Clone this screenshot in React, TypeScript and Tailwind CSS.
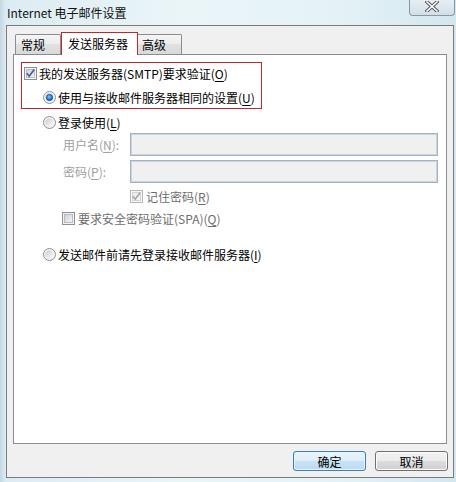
import React, { useId } from "react";

const FONT = "font-['Noto_Sans_CJK_SC','Microsoft_YaHei',sans-serif]";

function CheckBox({ checked, disabled }: { checked?: boolean; disabled?: boolean }) {
  const id = useId().replace(/:/g, "");
  const border = disabled ? "#b7b7b7" : "#8e8f8f";
  return (
    <svg width="13" height="13" viewBox="0 0 13 13" className="shrink-0 block">
      <defs>
        <linearGradient id={`g${id}`} x1="0" y1="0" x2="1" y2="1">
          <stop offset="0" stopColor={disabled ? "#ececec" : "#cbcfd5"} />
          <stop offset="1" stopColor={disabled ? "#fafafa" : "#f6f6f6"} />
        </linearGradient>
      </defs>
      <rect x="0.5" y="0.5" width="12" height="12" fill={disabled ? "#f7f7f7" : "#f4f4f4"} stroke={border} />
      <rect x="2.5" y="2.5" width="8" height="8" fill={`url(#g${id})`} stroke={disabled ? "#d5d5d5" : "#b9bdc4"} />
      {checked && (
        <path
          d="M2.8 6.3 L5.2 9.2 L10.2 2.6"
          stroke={disabled ? "#a7a7a7" : "#4b5f97"}
          strokeWidth="1.7"
          fill="none"
          strokeLinejoin="miter"
        />
      )}
    </svg>
  );
}

function Radio({ checked }: { checked?: boolean }) {
  const id = useId().replace(/:/g, "");
  return (
    <svg width="13" height="13" viewBox="0 0 13 13" className="shrink-0 block">
      <defs>
        <linearGradient id={`r${id}`} x1="0" y1="0" x2="1" y2="1">
          <stop offset="0" stopColor="#c9ccd1" />
          <stop offset="1" stopColor="#fbfbfb" />
        </linearGradient>
        <radialGradient id={`d${id}`} cx="0.45" cy="0.4" r="0.6">
          <stop offset="0" stopColor="#8fd6fb" />
          <stop offset="0.5" stopColor="#2b8ee0" />
          <stop offset="1" stopColor="#0f4f9c" />
        </radialGradient>
      </defs>
      <circle cx="6.5" cy="6.5" r="6" fill="#f4f4f4" stroke="#8e8f8f" />
      <circle cx="6.5" cy="6.5" r="4.2" fill={`url(#r${id})`} />
      {checked && <circle cx="6.5" cy="6.5" r="3.2" fill={`url(#d${id})`} stroke="#1d4f8c" strokeWidth="0.6" />}
    </svg>
  );
}

function U({ c }: { c: string }) {
  return <span className="underline underline-offset-[2px]">{c}</span>;
}

export default function App() {
  return (
    <div
      className={`${FONT} w-[456px] h-[482px] overflow-hidden text-[12px] leading-[13px] text-black bg-[linear-gradient(90deg,#c4d8e2_0px,#dcecf2_6px,#eaf5f8_40%,#e4f2f6_75%,#d3e7ef_100%)]`}
    >
      {/* Title bar */}
      <div className="h-[25px] flex justify-between">
        <div className="pl-[7px] pt-[6px] text-[12px] leading-[13px] text-[#111]">Internet 电子邮件设置</div>
        <div className="mr-[1px] w-[46px] h-[16px] rounded-b-[4px] border border-t-0 border-[#8797a8] bg-[linear-gradient(#e6eef3,#d2dee6)] flex items-start justify-center pt-[1px]">
          <svg width="14" height="11" viewBox="0 0 14 11">
            <path d="M2 1 L12 10 M12 1 L2 10" stroke="#4a4f55" strokeWidth="3.4" strokeLinecap="square" />
            <path d="M2 1 L12 10 M12 1 L2 10" stroke="#ffffff" strokeWidth="1.6" strokeLinecap="square" />
          </svg>
        </div>
      </div>

      {/* Client area */}
      <div className="ml-[6px] w-[448px] h-[453px] border border-[#7b7b7b] bg-[#f0f0f0] px-[6px] pt-[6px] flex flex-col">
        {/* Tabs */}
        <div className="h-[22px] flex items-end relative z-10">
          <div className="ml-[2px] w-[46px] h-[20px] border border-b-0 border-[#898c95] rounded-t-[2px] bg-[linear-gradient(#f5f5f5,#ececec_50%,#e1e1e1_50%,#d9d9d9)] pl-[5px] pt-[3px]">
            常规
          </div>
          <div className="w-[77px] h-[23px] -mb-[1px] border border-b-0 border-[#c4262e] bg-white flex justify-center pt-[4px] pr-[3px]">
            发送服务器
          </div>
          <div className="w-[44px] h-[20px] border border-b-0 border-l-0 border-[#898c95] rounded-tr-[2px] bg-[linear-gradient(#f5f5f5,#ececec_50%,#e1e1e1_50%,#d9d9d9)] pl-[4px] pt-[3px]">
            高级
          </div>
        </div>

        {/* Panel */}
        <div className="w-[434px] h-[390px] border border-[#898c95] bg-white flex flex-col">
          <div className="ml-[7px] mt-[7px] w-[241px] h-[47px] border border-[#c4262e] pl-[2px] pt-[4px] flex flex-col">
            <div className="flex items-center h-[13px]">
              <CheckBox checked />
              <span className="ml-[2px]">
                我的发送服务器(SMTP)要求验证(<U c="O" />)
              </span>
            </div>
            <div className="flex items-center h-[13px] ml-[19px] mt-[11px]">
              <Radio checked />
              <span className="ml-[2px]">
                使用与接收邮件服务器相同的设置(<U c="U" />)
              </span>
            </div>
          </div>

          <div className="flex items-center h-[13px] ml-[29px] mt-[7px]">
            <Radio />
            <span className="ml-[2px]">
              登录使用(<U c="L" />)
            </span>
          </div>

          <div className="flex items-center h-[23px] ml-[49px] mt-[4px]">
            <span className="w-[67px] text-[#a0a0a0]">
              用户名(<U c="N" />):
            </span>
            <div className="w-[308px] h-[23px] border border-[#a4b1c2] shadow-[inset_0_0_0_1px_#cbd5e0] bg-[#f0f0f0]" />
          </div>

          <div className="flex items-center h-[23px] ml-[49px] mt-[4px]">
            <span className="w-[67px] text-[#a0a0a0]">
              密码(<U c="P" />):
            </span>
            <div className="w-[308px] h-[23px] border border-[#a4b1c2] shadow-[inset_0_0_0_1px_#cbd5e0] bg-[#f0f0f0]" />
          </div>

          <div className="flex items-center h-[13px] ml-[116px] mt-[7px]">
            <CheckBox checked disabled />
            <span className="ml-[3px] text-[#6d6d6d]">
              记住密码(<U c="R" />)
            </span>
          </div>

          <div className="flex items-center h-[13px] ml-[48px] mt-[9px]">
            <CheckBox />
            <span className="ml-[3px] text-[#6d6d6d]">
              要求安全密码验证(SPA)(<U c="Q" />)
            </span>
          </div>

          <div className="flex items-center h-[13px] ml-[29px] mt-[23px]">
            <Radio />
            <span className="ml-[2px]">
              发送邮件前请先登录接收邮件服务器(<U c="I" />)
            </span>
          </div>
        </div>

        {/* Buttons */}
        <div className="mt-[7px] flex justify-end gap-[9px] -mr-[1px]">
          <button className="w-[73px] h-[20px] rounded-[3px] border border-[#3c7fb1] shadow-[inset_0_0_0_1px_#e6f3fb] bg-[linear-gradient(#eaf5fc,#deedf8_50%,#c8e2f5_50%,#bcdaf1)] text-[12px] leading-[13px] text-black">
            确定
          </button>
          <button className="w-[73px] h-[20px] rounded-[3px] border border-[#707070] shadow-[inset_0_0_0_1px_#fcfcfc] bg-[linear-gradient(#f2f2f2,#ebebeb_50%,#dddddd_50%,#cfcfcf)] text-[12px] leading-[13px] text-black">
            取消
          </button>
        </div>
      </div>
    </div>
  );
}
